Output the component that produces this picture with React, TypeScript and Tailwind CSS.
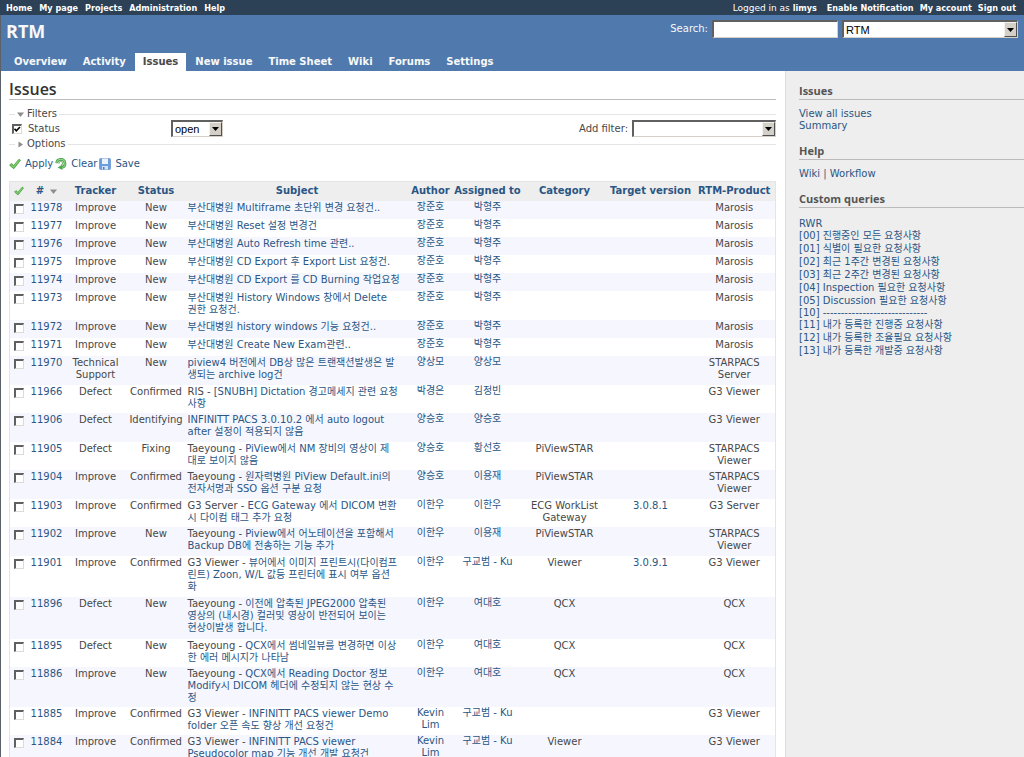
import React from 'react';

type Issue = {
  id: number;
  tracker: string;
  status: string;
  prefix?: string;
  subject: string[];
  author: string;
  assigned: string;
  category?: string;
  version?: string;
  product: string;
  height: string;
};

const issues: Issue[] = [
  { id: 11978, tracker: 'Improve', status: 'New', subject: ['부산대병원 Multiframe 초단위 변경 요청건..'], author: '장준호', assigned: '박형주', product: 'Marosis', height: 'h-[18px]' },
  { id: 11977, tracker: 'Improve', status: 'New', subject: ['부산대병원 Reset 설정 변경건'], author: '장준호', assigned: '박형주', product: 'Marosis', height: 'h-[18px]' },
  { id: 11976, tracker: 'Improve', status: 'New', subject: ['부산대병원 Auto Refresh time 관련..'], author: '장준호', assigned: '박형주', product: 'Marosis', height: 'h-[18px]' },
  { id: 11975, tracker: 'Improve', status: 'New', subject: ['부산대병원 CD Export 후 Export List 요청건.'], author: '장준호', assigned: '박형주', product: 'Marosis', height: 'h-[18px]' },
  { id: 11974, tracker: 'Improve', status: 'New', subject: ['부산대병원 CD Export 를 CD Burning 작업요청'], author: '장준호', assigned: '박형주', product: 'Marosis', height: 'h-[18px]' },
  { id: 11973, tracker: 'Improve', status: 'New', subject: ['부산대병원 History Windows 창에서 Delete', '권한 요청건.'], author: '장준호', assigned: '박형주', product: 'Marosis', height: 'h-[29px]' },
  { id: 11972, tracker: 'Improve', status: 'New', subject: ['부산대병원 history windows 기능 요청건..'], author: '장준호', assigned: '박형주', product: 'Marosis', height: 'h-[18px]' },
  { id: 11971, tracker: 'Improve', status: 'New', subject: ['부산대병원 Create New Exam관련..'], author: '장준호', assigned: '박형주', product: 'Marosis', height: 'h-[18px]' },
  { id: 11970, tracker: 'Technical Support', status: 'New', subject: ['piview4 버전에서 DB상 많은 트랜잭션발생은 발', '생되는 archive log건'], author: '양상모', assigned: '양상모', product: 'STARPACS Server', height: 'h-[29px]' },
  { id: 11966, tracker: 'Defect', status: 'Confirmed', prefix: 'RIS - ', subject: ['[SNUBH] Dictation 경고메세지 관련 요청', '사항'], author: '박경은', assigned: '김정빈', product: 'G3 Viewer', height: 'h-[28px]' },
  { id: 11906, tracker: 'Defect', status: 'Identifying', subject: ['INFINITT PACS 3.0.10.2 에서 auto logout', 'after 설정이 적용되지 않음'], author: '양승호', assigned: '양승호', product: 'G3 Viewer', height: 'h-[29px]' },
  { id: 11905, tracker: 'Defect', status: 'Fixing', prefix: 'Taeyoung - ', subject: ['PiView에서 NM 장비의 영상이 제', '대로 보이지 않음'], author: '양승호', assigned: '황선호', category: 'PiViewSTAR', product: 'STARPACS Viewer', height: 'h-[28px]' },
  { id: 11904, tracker: 'Improve', status: 'Confirmed', prefix: 'Taeyoung - ', subject: ['원자력병원 PiView Default.ini의', '전자서명과 SSO 옵션 구분 요청'], author: '양승호', assigned: '이용재', category: 'PiViewSTAR', product: 'STARPACS Viewer', height: 'h-[29px]' },
  { id: 11903, tracker: 'Improve', status: 'Confirmed', prefix: 'G3 Server - ', subject: ['ECG Gateway 에서 DICOM 변환', '시 다이컴 태그 추가 요청'], author: '이한우', assigned: '이한우', category: 'ECG WorkList Gateway', version: '3.0.8.1', product: 'G3 Server', height: 'h-[28px]' },
  { id: 11902, tracker: 'Improve', status: 'New', prefix: 'Taeyoung - ', subject: ['Piview에서 어노테이션을 포함해서', 'Backup DB에 전송하는 기능 추가'], author: '이한우', assigned: '이용재', category: 'PiViewSTAR', product: 'STARPACS Viewer', height: 'h-[29px]' },
  { id: 11901, tracker: 'Improve', status: 'Confirmed', prefix: 'G3 Viewer - ', subject: ['뷰어에서 이미지 프린트시(다이컴프', '린트) Zoon, W/L 값등 프린터에 표시 여부 옵션', '화'], author: '이한우', assigned: '구교범 - Ku', category: 'Viewer', version: '3.0.9.1', product: 'G3 Viewer', height: 'h-[41px]' },
  { id: 11896, tracker: 'Defect', status: 'New', prefix: 'Taeyoung - ', subject: ['이전에 압축된 JPEG2000 압축된', '영상의 (내시경) 컬러및 영상이 반전되어 보이는', '현상이발생 합니다.'], author: '이한우', assigned: '여대호', category: 'QCX', product: 'QCX', height: 'h-[42px]' },
  { id: 11895, tracker: 'Defect', status: 'New', prefix: 'Taeyoung - ', subject: ['QCX에서 썸네일뷰를 변경하면 이상', '한 에러 메시지가 나타남'], author: '이한우', assigned: '여대호', category: 'QCX', product: 'QCX', height: 'h-[28px]' },
  { id: 11886, tracker: 'Improve', status: 'New', prefix: 'Taeyoung - ', subject: ['QCX에서 Reading Doctor 정보', 'Modify시 DICOM 헤더에 수정되지 않는 현상 수', '정'], author: '이한우', assigned: '여대호', category: 'QCX', product: 'QCX', height: 'h-[40px]' },
  { id: 11885, tracker: 'Improve', status: 'Confirmed', prefix: 'G3 Viewer - ', subject: ['INFINITT PACS viewer Demo', 'folder 오픈 속도 향상 개선 요청건'], author: 'Kevin Lim', assigned: '구교범 - Ku', product: 'G3 Viewer', height: 'h-[28px]' },
  { id: 11884, tracker: 'Improve', status: 'Confirmed', prefix: 'G3 Viewer - ', subject: ['INFINITT PACS viewer', 'Pseudocolor map 기능 개선 개발 요청건'], author: 'Kevin Lim', assigned: '구교범 - Ku', category: 'Viewer', product: 'G3 Viewer', height: 'h-[28px]' },
];

const tabs = ['Overview', 'Activity', 'Issues', 'New issue', 'Time Sheet', 'Wiki', 'Forums', 'Settings'];

const queries = [
  '[00] 진행중인 모든 요청사항',
  '[01] 식별이 필요한 요청사항',
  '[02] 최근 1주간 변경된 요청사항',
  '[03] 최근 2주간 변경된 요청사항',
  '[04] Inspection 필요한 요청사항',
  '[05] Discussion 필요한 요청사항',
  '[10] -----------------------------',
  '[11] 내가 등록한 진행중 요청사항',
  '[12] 내가 등록한 조율필요 요청사항',
  '[13] 내가 등록한 개발중 요청사항',
];

const CheckIcon = ({ className = '' }: { className?: string }) => (
  <svg className={className} width="12" height="12" viewBox="0 0 12 12" aria-hidden="true">
    <path d="M0.6 7.2 2.4 5.4 4.6 7.4 10 1.2 11.5 2.3 4.8 10.8Z" fill="#5cb84c" stroke="#3f9a35" strokeWidth="0.7" strokeLinejoin="round" />
    <path d="M2 6.9 4.6 9 10.3 2.3" fill="none" stroke="#a5e094" strokeWidth="0.7" />
  </svg>
);

const ReloadIcon = () => (
  <svg width="12" height="12" viewBox="0 0 12 12" aria-hidden="true">
    <path d="M1.6 5.2A4.2 4.2 0 1 1 7 9.6" fill="none" stroke="#3f9a45" strokeWidth="2.6" />
    <path d="M1.6 5.2A4.2 4.2 0 1 1 7 9.6" fill="none" stroke="#8fd487" strokeWidth="1.1" />
    <path d="M7.4 6.6V12L2.6 9.4Z" fill="#4fa84f" />
    <path d="M4 5.6A1.8 1.8 0 1 1 6 7" fill="none" stroke="#5fae5c" strokeWidth="1" />
  </svg>
);

const SaveIcon = () => (
  <svg width="12" height="12" viewBox="0 0 12 12" aria-hidden="true">
    <rect x="0.5" y="0.5" width="11" height="11" rx="1" fill="#6c9ddd" stroke="#7ba3d8" />
    <rect x="3" y="0.5" width="6" height="5.5" fill="#e9f2fd" />
    <rect x="3" y="8" width="6" height="3.5" fill="#d3e2f6" />
    <rect x="4" y="9" width="1.5" height="2.5" fill="#4b7cc2" />
  </svg>
);

const Triangle = ({ open }: { open: boolean }) => (
  <svg width="7" height="7" viewBox="0 0 7 7" aria-hidden="true">
    <path d={open ? 'M0 1.5H7L3.5 6Z' : 'M1.5 0.5V6.5L6 3.5Z'} fill="#8c8c8c" />
  </svg>
);

type DropdownProps = { id: string; label: string; value: string; className: string };

const Dropdown = ({ id, label, value, className }: DropdownProps) => (
  <span className={`relative block border border-t-2 border-l-2 border-[#d4d0c8] border-t-[#606060] border-l-[#606060] bg-white ${className}`}>
    <select
      id={id}
      aria-label={label}
      defaultValue={value}
      className="block h-full w-full appearance-none bg-transparent pl-[2px] pr-4 font-['Liberation_Sans',sans-serif] text-[11px] leading-[14px] text-black outline-none"
    >
      <option value={value}>{value}</option>
    </select>
    <span className="pointer-events-none absolute inset-y-0 right-0 flex w-[13px] items-center justify-center border border-r-[#505050] border-b-[#505050] border-t-[#f4f2ee] border-l-[#f4f2ee] bg-[#d4d0c8]">
      <svg width="7" height="4" viewBox="0 0 7 4" aria-hidden="true">
        <path d="M0 0H7L3.5 4Z" fill="#000" />
      </svg>
    </span>
  </span>
);

const Tick = ({ label }: { label: string }) => (
  <input
    type="checkbox"
    aria-label={label}
    className="mx-auto block size-[10px] appearance-none border border-t-2 border-l-2 border-[#dedbd5] border-t-[#606060] border-l-[#606060] bg-white"
  />
);

const TopMenu = () => (
  <nav className="flex h-[15px] items-center justify-between bg-[#2c4056] pr-2 pl-[6px] font-['DejaVu_Sans_Condensed','DejaVu_Sans',sans-serif] text-[9px] leading-[14px] font-bold text-white">
    <div className="flex gap-[7px]">
      {['Home', 'My page', 'Projects', 'Administration', 'Help'].map((item) => (
        <a key={item} href="#">{item}</a>
      ))}
    </div>
    <div className="flex gap-[6px]">
      <span className="mr-1 font-['DejaVu_Sans',sans-serif] font-normal">
        Logged in as <a href="#" className="font-['DejaVu_Sans_Condensed','DejaVu_Sans',sans-serif] font-bold">limys</a>
      </span>
      <a href="#">Enable Notification</a>
      <a href="#">My account</a>
      <a href="#">Sign out</a>
    </div>
  </nav>
);

const Header = () => (
  <header className="flex h-14 flex-col justify-between bg-[#507aad] pr-[6px] pl-[5px] text-[#f8f8f8]">
    <div className="flex items-start justify-between">
      <h1 className="pt-[6px] font-['Open_Sans',sans-serif] text-[18px] leading-[20px] font-bold">RTM</h1>
      <form className="flex items-center gap-1 pt-[5px]">
        <label htmlFor="search" className="text-[10px] leading-[18px]">Search:</label>
        <input
          id="search"
          type="text"
          className="h-[18px] w-[126px] border border-t-2 border-l-2 border-[#d4d0c8] border-t-[#606060] border-l-[#606060] bg-white px-1 text-[11px] text-black outline-none"
        />
        <Dropdown id="project" label="Project" value="RTM" className="h-[18px] w-[176px]" />
      </form>
    </div>
    <nav className="flex text-[10px] leading-[18px] font-bold">
      {tabs.map((tab) => (
        <a
          key={tab}
          href="#"
          className={tab === 'Issues' ? 'mx-px bg-white px-2 text-[#484848]' : 'px-2'}
        >
          {tab}
        </a>
      ))}
    </nav>
  </header>
);

const Filters = () => (
  <form className="mt-2">
    <fieldset className="border-t border-[#e4e4e4]">
      <legend className="ml-[6px] px-[2px] leading-[12px]">
        <button type="button" className="flex items-center gap-[3px]">
          <Triangle open />
          Filters
        </button>
      </legend>
      <div className="flex h-[17px] items-center justify-between">
        <div className="flex items-center">
          <div className="flex w-[162px] items-center gap-[6px] pl-[3px]">
            <span className="relative block size-[10px]">
              <input
                id="status-filter"
                type="checkbox"
                defaultChecked
                className="block size-[10px] appearance-none border border-t-2 border-l-2 border-[#dedbd5] border-t-[#606060] border-l-[#606060] bg-white"
              />
              <svg className="pointer-events-none absolute inset-0" width="10" height="10" viewBox="0 0 10 10" aria-hidden="true">
                <path d="M2.5 4.8 4.3 6.8 8 3" fill="none" stroke="#000" strokeWidth="1.6" />
              </svg>
            </span>
            <label htmlFor="status-filter">Status</label>
          </div>
          <Dropdown id="status-operator" label="Status operator" value="open" className="h-[17px] w-[52px]" />
        </div>
        <div className="flex items-center gap-1">
          <label htmlFor="add-filter">Add filter:</label>
          <Dropdown id="add-filter" label="Add filter" value="" className="h-[17px] w-36" />
        </div>
      </div>
    </fieldset>
    <fieldset className="mt-px border-t border-[#e4e4e4]">
      <legend className="ml-[6px] px-[2px] leading-[12px]">
        <button type="button" className="flex items-center gap-[3px]">
          <Triangle open={false} />
          Options
        </button>
      </legend>
    </fieldset>
    <p className="mt-[7px] flex items-center gap-[2px] leading-[13px] text-[#2a5685]">
      <a href="#" className="flex items-center gap-1"><CheckIcon />Apply</a>
      <a href="#" className="flex items-center gap-1"><ReloadIcon />Clear</a>
      <a href="#" className="flex items-center gap-1"><SaveIcon />Save</a>
    </p>
  </form>
);

const IssueTable = () => (
  <table className="mt-[11px] w-full table-fixed border-collapse border border-[#e4e4e4] text-center leading-[12px]">
    <colgroup>
      <col className="w-[18px]" />
      <col className="w-[38px]" />
      <col className="w-[60px]" />
      <col className="w-[61px]" />
      <col className="w-[221px]" />
      <col className="w-[46px]" />
      <col className="w-[68px]" />
      <col className="w-[86px]" />
      <col className="w-[86px]" />
      <col className="w-[82px]" />
    </colgroup>
    <thead>
      <tr className="h-[19px] bg-[#eeeeee] whitespace-nowrap text-[#2a5685]">
        <th><CheckIcon className="mx-auto size-[10px]" /></th>
        <th>
          <a href="#" className="flex items-center justify-center gap-[6px]"># <Triangle open /></a>
        </th>
        {['Tracker', 'Status', 'Subject', 'Author', 'Assigned to', 'Category', 'Target version', 'RTM-Product'].map((name) => (
          <th key={name}><a href="#">{name}</a></th>
        ))}
      </tr>
    </thead>
    <tbody>
      {issues.map((issue) => (
        <tr key={issue.id} className={`align-top odd:bg-[#f6f7fe] ${issue.height}`}>
          <td className="pt-[3px]"><Tick label={`Select ${issue.id}`} /></td>
          <td className="pt-px"><a href="#" className="text-[#2a5685]">{issue.id}</a></td>
          <td className="pt-px">{issue.tracker}</td>
          <td className="pt-px">{issue.status}</td>
          <td className="pt-px pl-px text-left whitespace-nowrap">
            {issue.prefix}
            <a href="#" className="text-[#2a5685]">
              {issue.subject.map((line, i) => (
                <React.Fragment key={line}>
                  {i > 0 && <br />}
                  {line}
                </React.Fragment>
              ))}
            </a>
          </td>
          <td className="px-1"><a href="#" className="text-[#2a5685]">{issue.author}</a></td>
          <td><a href="#" className="text-[#2a5685]">{issue.assigned}</a></td>
          <td className="px-1 pt-px">{issue.category}</td>
          <td className="pt-px"><a href="#" className="text-[#2a5685]">{issue.version}</a></td>
          <td className="px-2 pt-px">{issue.product}</td>
        </tr>
      ))}
    </tbody>
  </table>
);

const SideHeading = ({ children }: { children: React.ReactNode }) => (
  <h3 className="border-b border-[#bbbbbb] font-['Open_Sans',sans-serif] text-[11px] leading-[16px] font-bold text-[#555555]">
    {children}
  </h3>
);

const Sidebar = () => (
  <aside className="w-[239px] shrink-0 border-l border-[#dddddd] bg-[#eeeeee] pt-3 pl-[13px] leading-[12px] text-[#2a5685]">
    <SideHeading>Issues</SideHeading>
    <div className="mt-2 mb-[11px] flex flex-col items-start">
      <a href="#">View all issues</a>
      <a href="#">Summary</a>
    </div>
    <SideHeading>Help</SideHeading>
    <p className="mt-2 mb-[11px]">
      <a href="#">Wiki</a> | <a href="#">Workflow</a>
    </p>
    <SideHeading>Custom queries</SideHeading>
    <ul className="mt-[10px] leading-[13px]">
      <li className="leading-[11px]"><a href="#">RWR</a></li>
      {queries.map((query) => (
        <li key={query} className={query.endsWith('--') ? 'leading-[11px]' : undefined}>
          <a href="#">{query}</a>
        </li>
      ))}
    </ul>
  </aside>
);

export default function App() {
  return (
    <div className="flex min-h-screen flex-col bg-white font-['DejaVu_Sans','Noto_Sans_CJK_KR',sans-serif] text-[10px] text-[#484848]">
      <TopMenu />
      <div className="flex flex-1 flex-col border-l border-[#5c6068]">
        <Header />
        <div className="flex flex-1">
          <main className="min-w-0 flex-1 pr-[9px] pl-2">
            <h2 className="mt-2 border-b border-[#bbbbbb] font-['Open_Sans',sans-serif] text-[16px] leading-[20px] font-semibold text-[#333333]">
              Issues
            </h2>
            <Filters />
            <IssueTable />
          </main>
          <Sidebar />
        </div>
      </div>
    </div>
  );
}
